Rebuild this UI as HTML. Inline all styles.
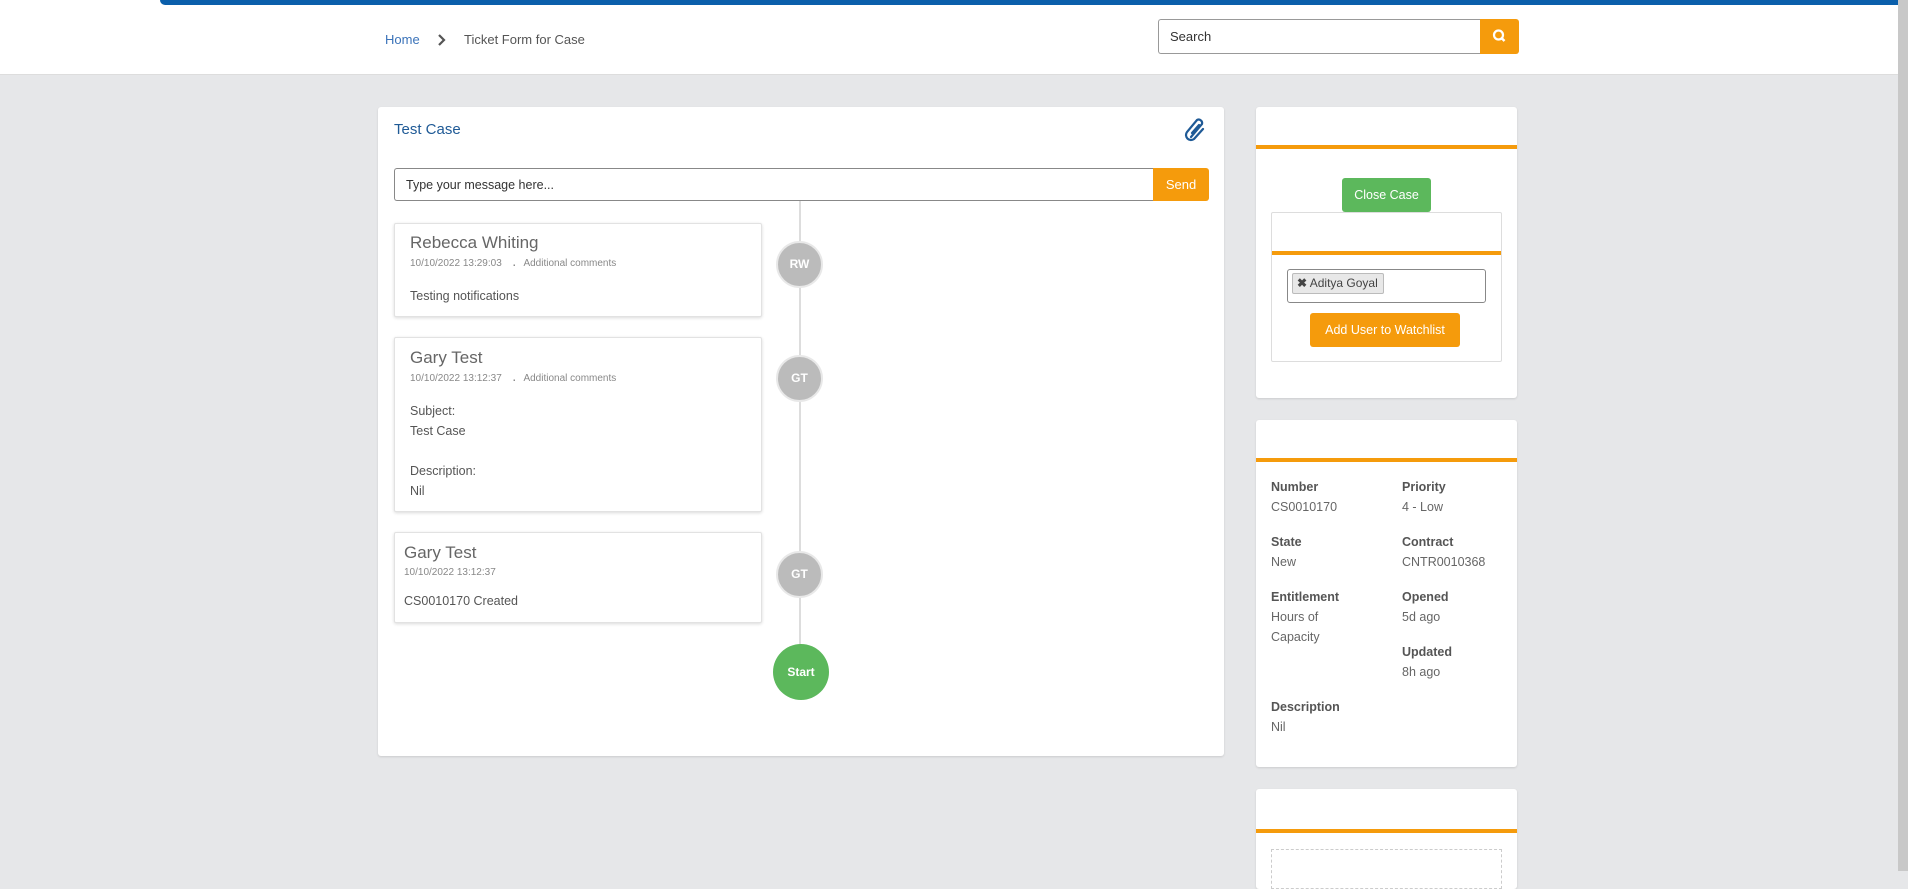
<!DOCTYPE html>
<html><head><meta charset="utf-8"><style>
*{box-sizing:border-box;margin:0;padding:0}
body{width:1908px;height:871px;overflow:hidden;background:#e6e7e9;font-family:"Liberation Sans",sans-serif;color:#555;position:relative}
.a{position:absolute;white-space:nowrap}
.card{position:absolute;background:#fff;border-radius:3px;box-shadow:0 1px 2px rgba(0,0,0,.12)}
.or{position:absolute;left:0;right:0;height:4px;background:#f59b0c}
.tl{position:absolute;background:#fff;border:1px solid #e2e2e2;box-shadow:0 1px 3px rgba(0,0,0,.15);border-radius:2px}
.nm{position:absolute;font-size:17px;color:#666}
.dt{position:absolute;font-size:10px;color:#888;white-space:nowrap}
.tx{position:absolute;font-size:12.5px;color:#555;line-height:20px}
.cir{position:absolute;width:47px;height:47px;border-radius:50%;background:#bbb;border:2px solid #e8e8e8;color:#fff;font-weight:bold;font-size:12px;text-align:center;line-height:43px}
.lb{position:absolute;font-size:12.5px;font-weight:bold;color:#555}
.vl{position:absolute;font-size:12.5px;color:#666;line-height:20px}
</style></head><body>
<div class="a" style="left:0;top:0;width:1908px;height:75px;background:#fff;border-bottom:1px solid #ddd"></div>
<div class="a" style="left:160px;top:0;width:1740px;height:5px;background:#0b5fab;border-bottom-left-radius:6px"></div>
<div class="a" style="left:1898px;top:0;width:10px;height:871px;background:#c8c8c8"></div>
<div class="a" style="left:385px;top:32px;font-size:13px;color:#3b73b9">Home</div>
<svg class="a" style="left:437px;top:33px" width="10" height="14"><path d="M2 2 L7 7 L2 12" stroke="#555" stroke-width="2.2" fill="none"/></svg>
<div class="a" style="left:464px;top:32px;font-size:13px;color:#555">Ticket Form for Case</div>
<div class="a" style="left:1158px;top:19px;width:323px;height:35px;border:1px solid #999;border-right:none;border-radius:3px 0 0 3px;background:#fff;font-size:13px;color:#333;padding:9px 11px">Search</div>
<div class="a" style="left:1480px;top:19px;width:39px;height:35px;background:#f59b0c;border-radius:0 3px 3px 0">
<svg width="39" height="35"><circle cx="18.5" cy="16" r="4.5" stroke="#fff" stroke-width="2.2" fill="none"/><line x1="21.5" y1="19" x2="24.5" y2="22" stroke="#fff" stroke-width="2.5"/></svg></div>

<div class="card" style="left:378px;top:107px;width:846px;height:649px"></div>
<div class="a" style="left:394px;top:121px;font-size:15px;color:#1f5a96">Test Case</div>
<svg class="a" style="left:1182px;top:116px" width="28" height="28" viewBox="0 0 28 28"><path d="M9 21 L20 8 A3.5 3.5 0 0 0 15 4 L5 16 A5 5 0 0 0 12 23 L21 13" stroke="#1f5a96" stroke-width="2.2" fill="none" stroke-linecap="round"/><path d="M10 17 L17 9" stroke="#1f5a96" stroke-width="2.2" stroke-linecap="round"/></svg>
<div class="a" style="left:394px;top:168px;width:760px;height:33px;border:1px solid #888;border-right:none;border-radius:3px 0 0 3px;background:#fff;font-size:12.5px;color:#333;padding:9px 11px">Type your message here...</div>
<div class="a" style="left:1153px;top:168px;width:56px;height:33px;background:#f59b0c;border-radius:0 3px 3px 0;color:#fff;font-size:13px;text-align:center;line-height:33px">Send</div>
<div class="a" style="left:799px;top:201px;width:2px;height:444px;background:#ddd"></div>

<div class="tl" style="left:394px;top:223px;width:368px;height:94px"></div>
<div class="nm" style="left:410px;top:233px">Rebecca Whiting</div>
<div class="dt" style="left:410px;top:258px">10/10/2022 13:29:03 &nbsp;&nbsp;&nbsp;<b>.</b>&nbsp;&nbsp; Additional comments</div>
<div class="tx" style="left:410px;top:286px">Testing notifications</div>
<div class="cir" style="left:776px;top:241px">RW</div>

<div class="tl" style="left:394px;top:337px;width:368px;height:175px"></div>
<div class="nm" style="left:410px;top:348px">Gary Test</div>
<div class="dt" style="left:410px;top:373px">10/10/2022 13:12:37 &nbsp;&nbsp;&nbsp;<b>.</b>&nbsp;&nbsp; Additional comments</div>
<div class="tx" style="left:410px;top:401px">Subject:<br>Test Case<br><br>Description:<br>Nil</div>
<div class="cir" style="left:776px;top:355px">GT</div>

<div class="tl" style="left:394px;top:532px;width:368px;height:91px"></div>
<div class="nm" style="left:404px;top:543px">Gary Test</div>
<div class="dt" style="left:404px;top:567px">10/10/2022 13:12:37</div>
<div class="tx" style="left:404px;top:591px">CS0010170 Created</div>
<div class="cir" style="left:776px;top:551px">GT</div>
<div class="a" style="left:773px;top:644px;width:56px;height:56px;border-radius:50%;background:#5cb85c;color:#fff;font-size:12px;font-weight:bold;text-align:center;line-height:56px">Start</div>

<div class="card" style="left:1256px;top:107px;width:261px;height:291px"><div class="or" style="top:38px"></div></div>
<div class="a" style="left:1271px;top:212px;width:231px;height:150px;border:1px solid #ddd;border-radius:2px;background:#fff"><div class="or" style="top:38px"></div></div>
<div class="a" style="left:1342px;top:178px;width:89px;height:34px;background:#5cb85c;border-radius:3px;color:#fff;font-size:12.5px;text-align:center;line-height:34px">Close Case</div>
<div class="a" style="left:1287px;top:269px;width:199px;height:34px;border:1px solid #888;border-radius:3px;background:#fff"></div>
<div class="a" style="left:1292px;top:273px;height:21px;background:#e8e8e8;border:1px solid #bbb;border-radius:2px;font-size:12px;color:#444;line-height:19px;padding:0 5px 0 4px"><b>&#10006;</b> Aditya Goyal</div>
<div class="a" style="left:1310px;top:313px;width:150px;height:34px;background:#f59b0c;border-radius:3px;color:#fff;font-size:12.5px;text-align:center;line-height:34px">Add User to Watchlist</div>

<div class="card" style="left:1256px;top:420px;width:261px;height:347px"><div class="or" style="top:38px"></div></div>
<div class="lb" style="left:1271px;top:480px">Number</div><div class="vl" style="left:1271px;top:497px">CS0010170</div>
<div class="lb" style="left:1402px;top:480px">Priority</div><div class="vl" style="left:1402px;top:497px">4 - Low</div>
<div class="lb" style="left:1271px;top:535px">State</div><div class="vl" style="left:1271px;top:552px">New</div>
<div class="lb" style="left:1402px;top:535px">Contract</div><div class="vl" style="left:1402px;top:552px">CNTR0010368</div>
<div class="lb" style="left:1271px;top:590px">Entitlement</div><div class="vl" style="left:1271px;top:607px">Hours of<br>Capacity</div>
<div class="lb" style="left:1402px;top:590px">Opened</div><div class="vl" style="left:1402px;top:607px">5d ago</div>
<div class="lb" style="left:1402px;top:645px">Updated</div><div class="vl" style="left:1402px;top:662px">8h ago</div>
<div class="lb" style="left:1271px;top:700px">Description</div><div class="vl" style="left:1271px;top:717px">Nil</div>

<div class="card" style="left:1256px;top:789px;width:261px;height:100px"><div class="or" style="top:40px"></div></div>
<div class="a" style="left:1271px;top:849px;width:231px;height:40px;border:1px dashed #ccc"></div>
</body></html>
